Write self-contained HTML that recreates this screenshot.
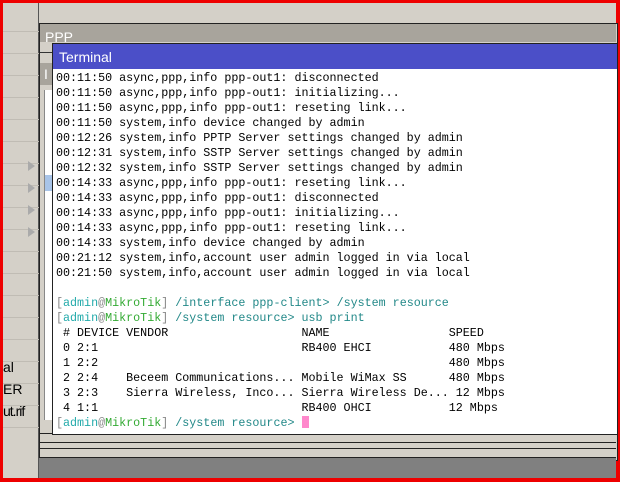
<!DOCTYPE html>
<html><head><style>
body{margin:0;width:620px;height:482px;overflow:hidden;background:#e00;position:relative;font-family:"Liberation Sans",sans-serif}
.abs{position:absolute}
#bg{left:3px;top:3px;width:613px;height:475px;background:#d4d0c8}
.row{position:absolute;left:0;width:36px;height:21px;border-bottom:1px solid #c0bcb4}
.tri{position:absolute;left:25px;width:0;height:0;border-left:7px solid #aaa;border-top:5px solid transparent;border-bottom:5px solid transparent}
#term{left:52px;top:43px;width:564px;height:390px;border:1px solid #222;background:#fff}
#tt{left:0;top:0;width:564px;height:25px;background:#4b4fc8;color:#fff;font-size:14px;line-height:26px;text-indent:6px}
pre{position:absolute;left:3px;top:27px;margin:0;font-family:"Liberation Mono",monospace;font-size:11.7px;line-height:15px;color:#000}
.g{color:#888}.b{color:#2aa}.gr{color:#3a3}.t{color:#288}
.cur{display:inline-block;width:7px;height:12px;background:#f8c;vertical-align:-2px}
</style></head><body>
<div class="abs" id="bg"></div>
<div class="abs" style="left:3px;top:3px;width:35px;height:475px;background:#d4d0c8;border-right:1px solid #555">
<div class="row" style="top:7px"></div><div class="row" style="top:29px"></div><div class="row" style="top:51px"></div><div class="row" style="top:73px"></div><div class="row" style="top:95px"></div><div class="row" style="top:117px"></div><div class="row" style="top:139px"></div><div class="row" style="top:161px"></div><div class="row" style="top:183px"></div><div class="row" style="top:205px"></div><div class="row" style="top:227px"></div><div class="row" style="top:249px"></div><div class="row" style="top:271px"></div><div class="row" style="top:293px"></div><div class="row" style="top:315px"></div><div class="row" style="top:337px"></div><div class="row" style="top:359px"></div><div class="row" style="top:381px"></div><div class="row" style="top:403px"></div>
<div class="tri" style="top:158px"></div><div class="tri" style="top:180px"></div><div class="tri" style="top:202px"></div><div class="tri" style="top:224px"></div>
<div class="abs" style="left:0;top:356px;font-size:14px">al</div>
<div class="abs" style="left:0;top:378px;font-size:14px">ER</div>
<div class="abs" style="left:0;top:400px;font-size:14px;letter-spacing:-1px">ut.rif</div>
</div>
<div class="abs" style="left:39px;top:23px;width:577px;height:436px;background:#d4d0c8;border:1px solid #222"></div>
<div class="abs" style="left:40px;top:24px;width:576px;height:18px;background:#a8a49c;color:#fff;font-size:14px;line-height:26px;text-indent:5px">PPP</div>
<div class="abs" style="left:40px;top:52px;width:13px;height:380px;background:#d4d0c8;border-top:1px solid #333"></div>
<div class="abs" style="left:40px;top:63px;width:12px;height:22px;background:#a8a49c;color:#fff;font-size:14px;line-height:22px;text-indent:4px">I</div>
<div class="abs" style="left:44px;top:90px;width:8px;height:330px;border-left:1px solid #888;background:#fff"></div>
<div class="abs" style="left:45px;top:175px;width:7px;height:16px;background:#a8c4e8"></div>
<div class="abs" style="left:40px;top:433px;width:576px;height:1px;background:#222"></div>
<div class="abs" style="left:40px;top:442px;width:576px;height:1px;background:#222"></div>
<div class="abs" style="left:40px;top:448px;width:576px;height:1px;background:#222"></div>
<div class="abs" style="left:40px;top:457px;width:576px;height:1px;background:#222"></div>
<div class="abs" style="left:39px;top:458px;width:577px;height:20px;background:#808080"></div>
<div class="abs" id="term">
<div class="abs" id="tt">Terminal</div>
<pre>00:11:50 async,ppp,info ppp-out1: disconnected
00:11:50 async,ppp,info ppp-out1: initializing...
00:11:50 async,ppp,info ppp-out1: reseting link...
00:11:50 system,info device changed by admin
00:12:26 system,info PPTP Server settings changed by admin
00:12:31 system,info SSTP Server settings changed by admin
00:12:32 system,info SSTP Server settings changed by admin
00:14:33 async,ppp,info ppp-out1: reseting link...
00:14:33 async,ppp,info ppp-out1: disconnected
00:14:33 async,ppp,info ppp-out1: initializing...
00:14:33 async,ppp,info ppp-out1: reseting link...
00:14:33 system,info device changed by admin
00:21:12 system,info,account user admin logged in via local
00:21:50 system,info,account user admin logged in via local

<span class="g">[</span><span class="b">admin</span><span class="g">@</span><span class="gr">MikroTik</span><span class="g">]</span> <span class="t">/interface ppp-client&gt;</span> <span class="t">/system resource</span>
<span class="g">[</span><span class="b">admin</span><span class="g">@</span><span class="gr">MikroTik</span><span class="g">]</span> <span class="t">/system resource&gt;</span> <span class="t">usb print</span>
 # DEVICE VENDOR                   NAME                 SPEED
 0 2:1                             RB400 EHCI           480 Mbps
 1 2:2                                                  480 Mbps
 2 2:4    Beceem Communications... Mobile WiMax SS      480 Mbps
 3 2:3    Sierra Wireless, Inco... Sierra Wireless De... 12 Mbps
 4 1:1                             RB400 OHCI           12 Mbps
<span class="g">[</span><span class="b">admin</span><span class="g">@</span><span class="gr">MikroTik</span><span class="g">]</span> <span class="t">/system resource&gt;</span> <span class="cur"></span></pre>
</div>
</body></html>
